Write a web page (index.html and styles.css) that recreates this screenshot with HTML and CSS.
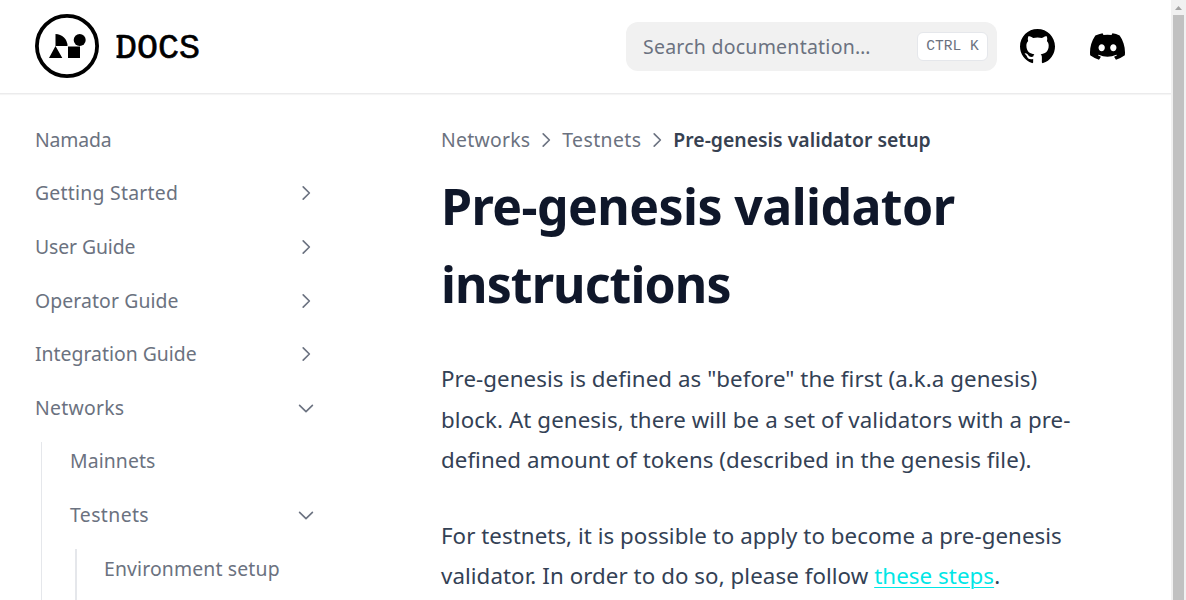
FILE: index.html
```html
<!DOCTYPE html>
<html lang="en">
<head>
<meta charset="utf-8">
<title>Pre-genesis validator setup</title>
<link rel="stylesheet" href="styles.css">
</head>
<body>
<div class="page">
  <header class="header">
    <a class="brand">
      <svg width="64" height="64" viewBox="0 0 64 64"><circle cx="32" cy="32" r="30.1" fill="none" stroke="#000" stroke-width="3.8"/><path d="M20.5 20a12 12 0 0 1 12 12h-12zM20.5 32l6.8 12H14zM33 32.5h12V44H33z"/><circle cx="44.7" cy="26" r="6"/></svg>
      <svg class="wordmark" width="92" height="48" viewBox="0 -4 92 48"><text class="wordmark-text" x="0" y="32" textLength="84">DOCS</text><path d="M.5 9h7v2.8h-7zM.5 29.2h7V32h-7z"/></svg>
    </a>
    <div class="search"><span class="search-label">Search documentation…</span><kbd class="key">CTRL K</kbd></div>
    <a class="icon github"><svg width="35" height="35" viewBox="0 0 24 24"><path d="M12 0C5.37 0 0 5.37 0 12c0 5.31 3.435 9.795 8.205 11.385.6.105.825-.255.825-.57 0-.285-.015-1.23-.015-2.235-3.015.555-3.795-.735-4.035-1.41-.135-.345-.72-1.41-1.23-1.695-.42-.225-1.02-.78-.015-.795.945-.015 1.62.87 1.845 1.23 1.08 1.815 2.805 1.305 3.495.99.105-.78.42-1.305.765-1.605-2.67-.3-5.46-1.335-5.46-5.925 0-1.305.465-2.385 1.23-3.225-.12-.3-.54-1.53.12-3.18 0 0 1.005-.315 3.3 1.23.96-.27 1.98-.405 3-.405s2.04.135 3 .405c2.295-1.56 3.3-1.23 3.3-1.23.66 1.65.24 2.88.12 3.18.765.84 1.23 1.905 1.23 3.225 0 4.605-2.805 5.625-5.475 5.925.435.375.81 1.095.81 2.22 0 1.605-.015 2.895-.015 3.3 0 .315.225.69.825.57A12.02 12.02 0 0 0 24 12c0-6.63-5.37-12-12-12z"/></svg></a>
    <a class="icon"><svg width="35" height="27" viewBox="0 0 127.14 96.36"><path d="M107.7 8.07A105.15 105.15 0 0 0 81.47 0a72.06 72.06 0 0 0-3.36 6.83 97.68 97.68 0 0 0-29.11 0A72.37 72.37 0 0 0 45.64 0a105.89 105.89 0 0 0-26.25 8.09C2.79 32.65-1.71 56.6.54 80.21a105.73 105.73 0 0 0 32.17 16.15 77.7 77.7 0 0 0 6.89-11.11 68.42 68.42 0 0 1-10.85-5.18c.91-.66 1.8-1.34 2.66-2a75.57 75.57 0 0 0 64.32 0c.87.71 1.76 1.39 2.66 2a68.68 68.68 0 0 1-10.87 5.19 77 77 0 0 0 6.89 11.1 105.25 105.25 0 0 0 32.19-16.14c2.64-27.38-4.51-51.11-18.9-72.15zM42.45 65.69C36.18 65.69 31 60 31 53s5-12.74 11.43-12.74S54 46 53.89 53s-5.05 12.69-11.44 12.69zm42.24 0C78.41 65.69 73.25 60 73.25 53s5-12.74 11.44-12.74S96.23 46 96.12 53s-5.04 12.69-11.43 12.69z"/></svg></a>
  </header>
  <div class="columns">
    <nav class="sidebar">
      <a class="item namada">Namada</a>
      <a class="item start">Getting Started<svg class="chev" viewBox="0 0 16 16"><path d="M5.5 2.5 11 8 5.5 13.5"/></svg></a>
      <a class="item user">User Guide<svg class="chev" viewBox="0 0 16 16"><path d="M5.5 2.5 11 8 5.5 13.5"/></svg></a>
      <a class="item operator">Operator Guide<svg class="chev" viewBox="0 0 16 16"><path d="M5.5 2.5 11 8 5.5 13.5"/></svg></a>
      <a class="item integration">Integration Guide<svg class="chev" viewBox="0 0 16 16"><path d="M5.5 2.5 11 8 5.5 13.5"/></svg></a>
      <a class="item networks">Networks<svg class="chev" viewBox="0 0 16 16"><path d="M2.3 5.6 8 11.2 13.7 5.6"/></svg></a>
      <div class="branch">
        <a class="item mainnets">Mainnets</a>
        <a class="item testnets">Testnets<svg class="chev" viewBox="0 0 16 16"><path d="M2.3 5.6 8 11.2 13.7 5.6"/></svg></a>
        <div class="branch inner"><a class="item environment">Environment setup</a></div>
      </div>
    </nav>
    <main class="content">
      <div class="crumbs"><span class="crumb-networks">Networks</span><svg class="chev" viewBox="0 0 16 16"><path d="M5.5 2.5 11 8 5.5 13.5"/></svg><span class="crumb-testnets">Testnets</span><svg class="chev" viewBox="0 0 16 16"><path d="M5.5 2.5 11 8 5.5 13.5"/></svg><span class="current">Pre-genesis validator setup</span></div>
      <h1 class="title"><span class="t1">Pre-genesis validator</span><br><span class="t2">instructions</span></h1>
      <p class="para"><span class="l1">Pre-genesis is defined as "before" the first (a.k.a genesis)</span><br><span class="l2">block. At genesis, there will be a set of validators with a pre-</span><br><span class="l3">defined amount of tokens (described in the genesis file).</span></p>
      <p class="para"><span class="l4">For testnets, it is possible to apply to become a pre-genesis</span><br><span class="l5">validator. In order to do so, please follow </span><a class="link">these steps</a>.</p>
    </main>
  </div>
</div>
<div class="scrollbar"><svg class="arrow" width="7" height="4" viewBox="0 0 7 4"><path d="M3.5 0 7 4H0z"/></svg><div class="thumb"></div></div>
</body>
</html>
```
FILE: styles.css
```css
* { box-sizing: border-box; }
body { margin: 0; height: 600px; overflow: hidden; display: flex; background: #fff; font-family: "Noto Sans", sans-serif; color: #334155; }
.page { width: 1171px; height: 600px; overflow: hidden; }
.header { height: 93px; display: flex; align-items: center; padding: 0 46px 0 35px; box-shadow: 0 1px 0 #ebebec, 0 2px 1px #f5f5f5; }
.brand { display: flex; align-items: center; gap: 17px; margin: 0 auto 1px 0; }
.wordmark { overflow: visible; }
.wordmark-text { font: 35px "Liberation Mono", monospace; stroke: #000; stroke-width: .6px; }
.search { width: 371px; height: 49px; border-radius: 12px; background: #f1f1f1; display: flex; align-items: center; justify-content: space-between; padding: 0 9px 0 17px; color: #6b7280; font-size: 19.5px; }
.search-label { letter-spacing: .24px; }
.key { width: 71px; height: 29px; border: 1px solid #e5e7eb; border-radius: 6px; background: #fff; font: 14.6px/26px "Liberation Mono", monospace; text-align: center; }
.icon { display: flex; }
.github { margin: 0 35px 0 23px; }
.columns { display: flex; }
.sidebar { width: 441px; padding: 19.6px 125px 0 35px; color: #6b7280; font-size: 19.4px; }
.item { height: 53.6px; display: flex; align-items: center; justify-content: space-between; white-space: nowrap; }
.namada { letter-spacing: -.15px; }
.start { letter-spacing: .25px; }
.user { letter-spacing: -.1px; }
.operator { letter-spacing: .1px; }
.networks, .crumb-networks { letter-spacing: .25px; }
.mainnets { letter-spacing: .1px; }
.testnets, .crumb-testnets { letter-spacing: .4px; }
.environment { letter-spacing: .15px; }
.chev { width: 18px; height: 18px; flex: none; fill: none; stroke: #6b7280; stroke-width: 1.45; stroke-linecap: round; stroke-linejoin: round; margin-top: 1px; }
.sidebar .chev { margin-right: 1px; }
.branch { display: flow-root; margin: 8px 0 0 6px; border-left: 1px solid #e5e7eb; padding-left: 28px; height: 240px; }
.branch .item:first-child { margin-top: -8px; }
.inner { border-left-width: 2px; padding-left: 27px; height: 140px; margin-left: 5px; }
.content { width: 650px; padding-top: 32px; }
.crumbs { height: 28px; display: flex; align-items: center; gap: 7px; color: #6b7280; font-size: 19.4px; white-space: nowrap; }
.current { color: #374151; font-weight: 600; }
.title { margin: 15px 0 0; color: #0f172a; font-size: 50px; font-weight: 700; line-height: 77.7px; white-space: nowrap; }
.t1 { letter-spacing: -.57px; }
.t2 { letter-spacing: -.9px; }
.para { margin: 36px 0 0; font-size: 22.3px; line-height: 40.5px; white-space: nowrap; }
.para + .para { margin-top: 35px; }
.l1 { letter-spacing: .07px; }
.l2 { letter-spacing: .09px; }
.l3, .l4 { letter-spacing: .05px; }
.l5, .link { letter-spacing: .07px; }
.link { color: #00e6e6; text-decoration: underline; text-decoration-thickness: 1px; text-underline-offset: 3px; }
.scrollbar { width: 15px; height: 600px; background: #f1f1f1; padding: 6px 2px 0; display: flex; flex-direction: column; align-items: center; }
.arrow { fill: #a3a3a3; flex: none; }
.thumb { width: 11px; flex: 1; margin-top: 5px; background: #c1c1c1; }
```
